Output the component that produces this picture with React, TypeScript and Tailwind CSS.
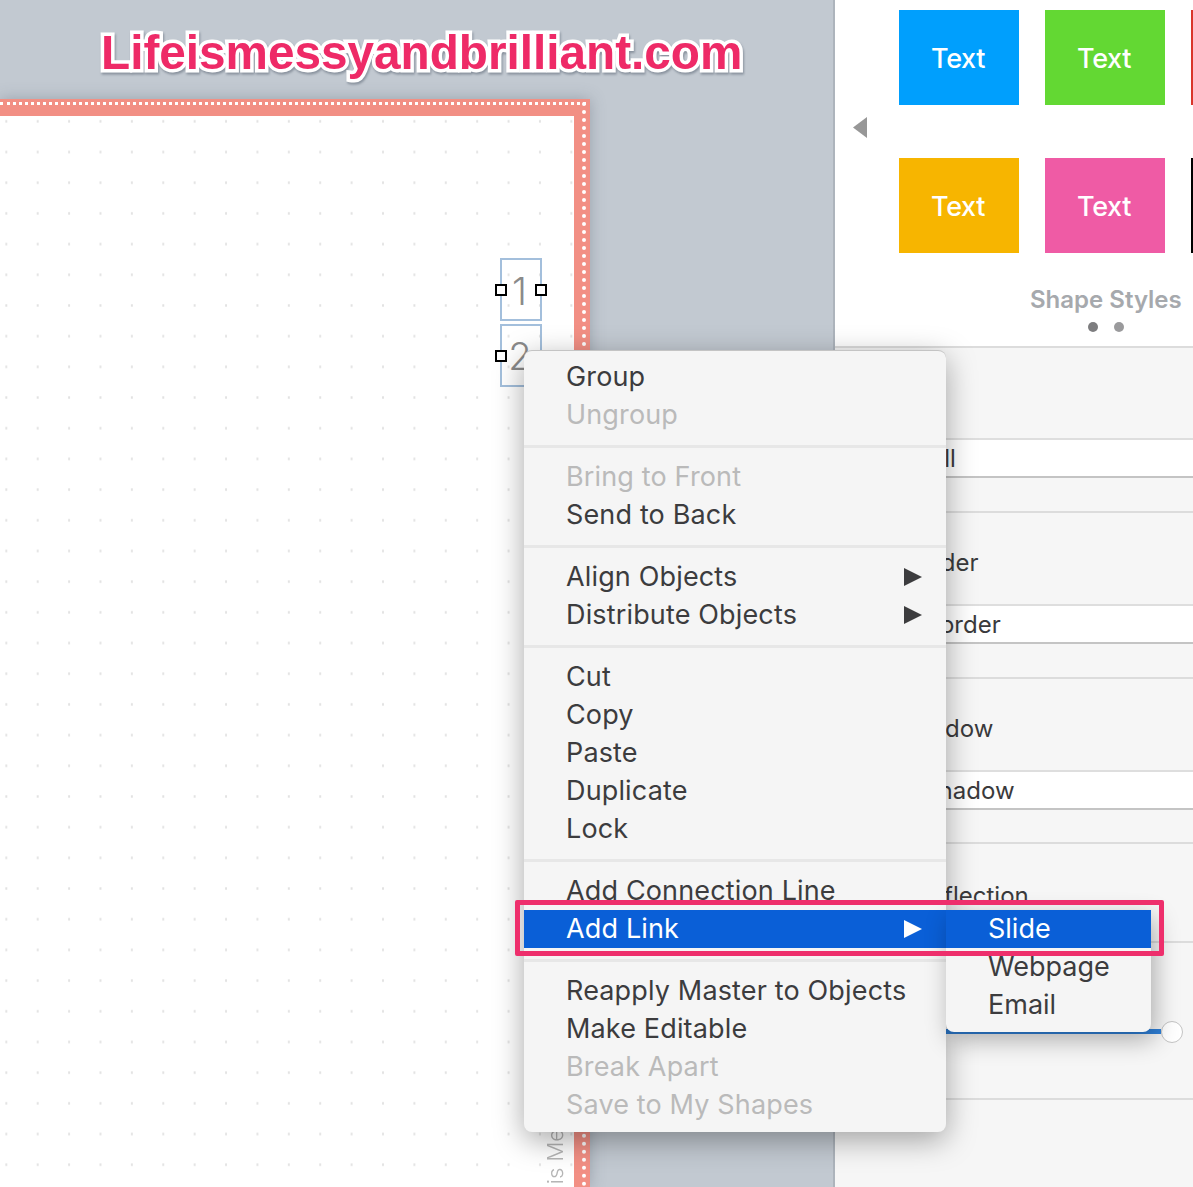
const font = "font-['Inter','Liberation_Sans',sans-serif]";

function Tile({ color, label = true }: { color: string; label?: boolean }) {
  return (
    <div className={`${color} w-[120px] h-[95px] shrink-0 flex items-center justify-center text-white text-[27px] font-medium tracking-[-0.4px] pt-[4px] pr-[2px]`}>
      {label ? "Text" : ""}
    </div>
  );
}

function Arrow({ fill }: { fill: string }) {
  return (
    <svg width="18" height="20" viewBox="0 0 18 20" className="shrink-0">
      <polygon points="0,1 18,10 0,19" fill={fill} />
    </svg>
  );
}

function Item({ text, disabled, arrow }: { text: string; disabled?: boolean; arrow?: boolean }) {
  return (
    <div className={`h-[38px] flex items-center justify-between pl-[42px] pr-[24px] ${disabled ? "text-[#bababa]" : "text-[#3c3c3e]"}`}>
      <span>{text}</span>
      {arrow ? <Arrow fill="#3c3c3e" /> : null}
    </div>
  );
}

function Sep() {
  return <div className="h-[3px] bg-[#e7e7e7] mt-[11px] mb-[10px]" />;
}

function PanelSection({ label, value, height, head, valueLeft }: { label: string; value: string; height: string; head: string; valueLeft: string }) {
  return (
    <div className={`${height} shrink-0 border-b-2 border-[#dcdcdc] flex flex-col`}>
      <div className={`${head} shrink-0 pl-[67px] pt-[9px] flex items-center`}>{label}</div>
      <div className={`h-[40px] shrink-0 bg-white border-t-2 border-[#dedede] border-b-2 border-b-[#c4c4c4] pt-[2px] flex items-center ${valueLeft}`}>{value}</div>
    </div>
  );
}

export default function App() {
  return (
    <div className={`${font} w-[1193px] h-[1187px] relative overflow-hidden flex bg-[#c2c9d1]`}>
      {/* canvas */}
      <div className="w-[835px] h-full shrink-0 flex flex-col border-r-2 border-[#adb4bc]">
        <div className="h-[99px] shrink-0 pl-[101px] pt-[21px]">
          <span className="font-['Liberation_Sans',sans-serif] font-bold text-[47.7px] leading-[64px] text-[#ee2a67] [-webkit-text-stroke:7px_white] [paint-order:stroke_fill] [filter:drop-shadow(1px_2px_1px_rgba(90,100,115,0.55))]">
            Lifeismessyandbrilliant.com
          </span>
        </div>
        <div className="w-[590px] flex-1 bg-[#f28f84] shadow-[0_0_14px_rgba(80,90,105,0.35)] pt-[3px] pr-[4px]">
          <div className="h-full border-t-[3px] border-r-[4px] border-dotted border-white">
            <div className="h-full mr-[8px] mt-[11px] bg-white bg-[radial-gradient(circle,#e2e2e2_1px,transparent_1.4px)] bg-[size:31.4px_30.7px] bg-[position:22px_-10px] relative">
              <div className="absolute left-[500px] top-[142px] w-[42px] h-[63px] border-2 border-[#a3bfdc] flex items-center justify-center pt-[3px] pr-[3px] text-[38px] font-light text-[#8a8a8a]">1</div>
              <div className="absolute left-[500px] top-[208px] w-[42px] h-[63px] border-2 border-[#a3bfdc] flex items-center justify-center pt-[2px] pr-[2px] text-[38px] font-light text-[#8a8a8a]">2</div>
              <div className="absolute left-[495px] top-[168px] w-[12px] h-[12px] border-2 border-black bg-white" />
              <div className="absolute left-[535px] top-[168px] w-[12px] h-[12px] border-2 border-black bg-white" />
              <div className="absolute left-[495px] top-[234px] w-[12px] h-[12px] border-2 border-black bg-white" />
              <div className="absolute left-[543px] bottom-[14px] text-[22px] leading-[24px] font-light text-[#b5b5b5] [writing-mode:vertical-rl] rotate-180 whitespace-nowrap">is Me</div>
            </div>
          </div>
        </div>
      </div>

      {/* right panel */}
      <div className="flex-1 min-w-0 flex flex-col bg-[#f6f6f6] text-[24px] text-[#3a3a3c] whitespace-nowrap">
        <div className="h-[348px] shrink-0 bg-white border-b-2 border-[#dcdcdc] flex flex-col">
          <div className="flex items-center">
            <div className="w-[64px] pl-[18px] shrink-0 pt-[1px]">
              <svg width="14" height="21" viewBox="0 0 14 21">
                <polygon points="14,0 0,10.5 14,21" fill="#979797" />
              </svg>
            </div>
            <div className="flex flex-col gap-[53px] pt-[10px] overflow-hidden">
              <div className="flex gap-[26px]">
                <Tile color="bg-[#009ffd]" />
                <Tile color="bg-[#63d833]" />
                <Tile color="bg-[#d9352a]" label={false} />
              </div>
              <div className="flex gap-[26px]">
                <Tile color="bg-[#f7b500]" />
                <Tile color="bg-[#ef5ba5]" />
                <Tile color="bg-black" label={false} />
              </div>
            </div>
          </div>
          <div className="mt-[30px] pl-[195px] text-[24px] leading-[34px] font-semibold text-[#a6a9ad]">Shape Styles</div>
          <div className="flex gap-[16px] pl-[253px] mt-[5px]">
            <div className="w-[10px] h-[10px] rounded-full bg-[#7d7d7f]" />
            <div className="w-[10px] h-[10px] rounded-full bg-[#9a9a9c]" />
          </div>
        </div>
        <PanelSection label="Fill" value="No Fill" height="h-[165px]" head="h-[90px]" valueLeft="pl-[50px]" />
        <PanelSection label="Border" value="No Border" height="h-[166px]" head="h-[91px]" valueLeft="pl-[50px]" />
        <PanelSection label="Shadow" value="No Shadow" height="h-[165px]" head="h-[91px]" valueLeft="pl-[49px]" />
        <div className="h-[99px] shrink-0 border-b-2 border-[#dcdcdc] flex items-center pl-[80px] pt-[6px]">Reflection</div>
        <div className="h-[157px] shrink-0 border-b-2 border-[#dcdcdc] flex items-center pl-[40px] pr-[10px] pt-[22px]">
          <div className="flex-1 h-[5px] bg-[#2f80d8]" />
          <div className="w-[22px] h-[22px] rounded-full bg-white border border-[#c4c4c4] shrink-0" />
        </div>
      </div>

      {/* context menu */}
      <div className="absolute left-[524px] top-[350px] w-[422px] h-[782px] bg-[#f5f5f5] rounded-[8px] border-t border-[#c4c4c4] pt-[7px] text-[27px] tracking-[0.15px] shadow-[0_8px_30px_rgba(0,0,0,0.35)]">
        <Item text="Group" />
        <Item text="Ungroup" disabled />
        <Sep />
        <Item text="Bring to Front" disabled />
        <Item text="Send to Back" />
        <Sep />
        <Item text="Align Objects" arrow />
        <Item text="Distribute Objects" arrow />
        <Sep />
        <Item text="Cut" />
        <Item text="Copy" />
        <Item text="Paste" />
        <Item text="Duplicate" />
        <Item text="Lock" />
        <Sep />
        <Item text="Add Connection Line" />
        <div className="h-[38px] flex items-center justify-between pl-[42px] pr-[24px] bg-[#0a5fd7] text-white">
          <span>Add Link</span>
          <Arrow fill="#ffffff" />
        </div>
        <Sep />
        <Item text="Reapply Master to Objects" />
        <Item text="Make Editable" />
        <Item text="Break Apart" disabled />
        <Item text="Save to My Shapes" disabled />
      </div>

      {/* submenu */}
      <div className="absolute left-[946px] top-[910px] w-[205px] h-[122px] bg-[#f5f5f5] rounded-b-[8px] text-[27px] text-[#3c3c3e] shadow-[4px_8px_24px_rgba(0,0,0,0.3)]">
        <div className="h-[38px] flex items-center pl-[42px] bg-[#0a5fd7] text-white">Slide</div>
        <div className="h-[38px] flex items-center pl-[42px]">Webpage</div>
        <div className="h-[38px] flex items-center pl-[42px]">Email</div>
      </div>

      {/* annotation frame */}
      <div className="absolute left-[515px] top-[900px] w-[649px] h-[56px] border-[5px] border-[#ee2f6c] rounded-[2px]" />
    </div>
  );
}
